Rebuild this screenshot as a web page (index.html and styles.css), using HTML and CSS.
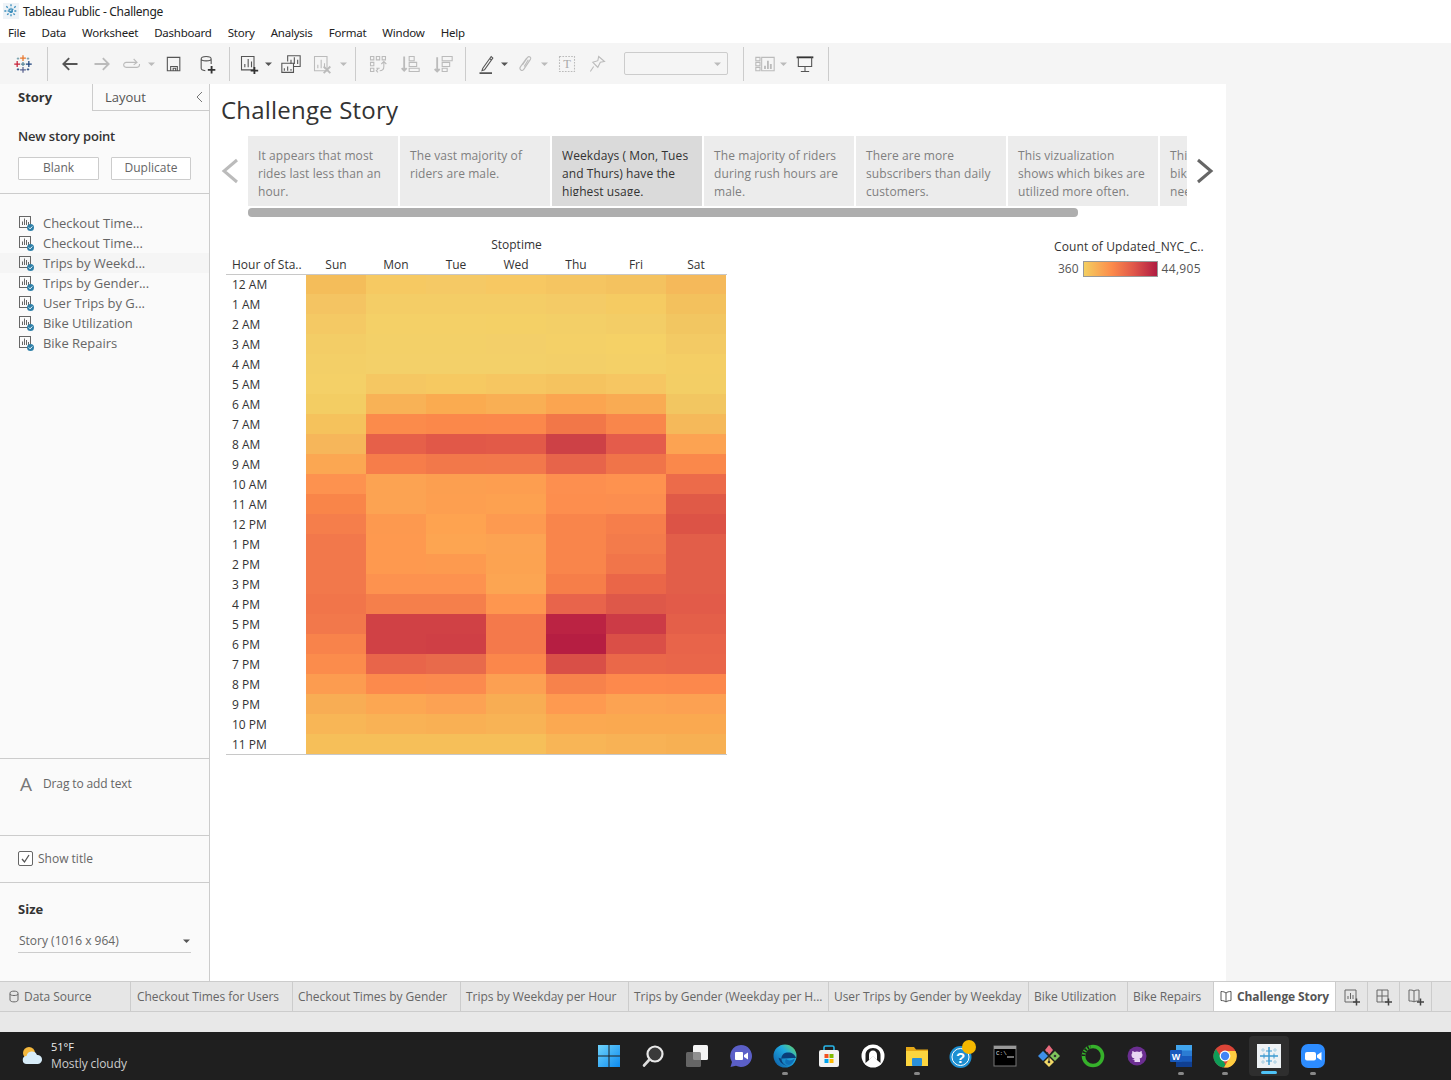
FILE: index.html
```html
<!DOCTYPE html>
<html lang="en">
<head>
  <meta charset="UTF-8" />
  <title>Tableau Public - Challenge</title>
  <link rel="stylesheet" href="styles.css">
</head>
<body>
  <svg class="defs" width="0" height="0">
    <symbol id="tab-logo" viewBox="0 0 24 24">
      <path d="M12 1.500v7M8.500 5h7" stroke="#e8762c" stroke-width="1.500"/>
      <path d="M12 15.500v7M8.500 19h7" stroke="#5b6591" stroke-width="1.500"/>
      <path d="M5 8.500v7M1.500 12h7" stroke="#c72037" stroke-width="1.500"/>
      <path d="M19 8.500v7M15.500 12h7" stroke="#1f447d" stroke-width="1.500"/>
      <path d="M12 9.500v5M9.500 12h5" stroke="#59879b" stroke-width="1.500"/>
      <path d="M6 4v3M4.500 5.500h3M18 4v3M16.500 5.500h3" stroke="#7099a6"/>
      <path d="M6 17v3M4.500 18.500h3M18 17v3M16.500 18.500h3" stroke="#1f447d"/>
    </symbol>
    <symbol id="sheet-ok" viewBox="0 0 16 16">
      <rect x="1.500" y="1.500" width="11" height="11" fill="none" stroke="#666"/>
      <path d="M4.500 10V6.500M6.500 10V3.500M8.500 10V5M10.500 10V7" stroke="#666" fill="none"/>
      <circle cx="12.500" cy="12.500" r="3.500" fill="#2f80a8"/>
      <path d="M10.800 12.500l1.300 1.300 2.200-2.300" stroke="#fff" fill="none"/>
    </symbol>
    <symbol id="caret" viewBox="0 0 8 8"><path d="M0 2.500h7L3.500 6z"/></symbol>
  </svg>

  <div class="titlebar">
    <svg class="title-icon" width="16" height="16" viewBox="0 0 24 24"><rect width="24" height="24" fill="#eef3f7"/><path d="M12 2v20M2 12h20M5 5l14 14M19 5L5 19" stroke="#3d8fbd" stroke-width="2" stroke-dasharray="3 2"/></svg>
    <span>Tableau Public - Challenge</span>
  </div>
  <nav class="menubar">
    <span>File</span><span>Data</span><span>Worksheet</span><span>Dashboard</span><span>Story</span><span>Analysis</span><span>Format</span><span>Window</span><span>Help</span>
  </nav>

  <div class="toolbar">
    <div class="tb logo-cell"><svg width="18" height="18"><use href="#tab-logo"/></svg></div>
    <i class="tb-sep"></i>
    <div class="tb w32"><svg viewBox="0 0 24 24"><path d="M21 12H4M11 5l-7 7 7 7" class="dark thick"/></svg></div>
    <div class="tb w32"><svg viewBox="0 0 24 24"><path d="M3 12h17M13 5l7 7-7 7" class="off thick"/></svg></div>
    <div class="tb w28"><svg viewBox="0 0 24 24"><path d="M17 10H5a3 3 0 0 0 0 6h13a3 3 0 0 0 3-3v-1M14 6l4 4-4 3" class="off"/></svg></div>
    <div class="tb w12"><svg class="car off-fill" width="8" height="8"><use href="#caret"/></svg></div>
    <div class="tb w32"><svg viewBox="0 0 24 24"><path d="M4 4h15v16H4zM8 20v-5h8v5M11 20v-3h3v3" class="dark"/></svg></div>
    <div class="tb w33"><svg viewBox="0 0 24 24"><path d="M5 6c0-4 12-4 12 0v6M5 6c0 3 12 3 12 0M5 6v11c0 1.500 2 2.500 5 3" class="dark"/><path d="M13 19h9M17.500 14.500v9" class="black thick"/></svg></div>
    <i class="tb-sep"></i>
    <div class="tb w26"><svg viewBox="0 0 24 24"><path d="M3 3h15v16H3zM7 16v-4M11 16V6M15 16V9" class="dark"/><path d="M14 20h9M18.500 15.500v8.500" class="black thick"/></svg></div>
    <div class="tb w14"><svg class="car dark-fill" width="8" height="8"><use href="#caret"/></svg></div>
    <div class="tb w30"><svg viewBox="0 0 24 24"><path d="M8 9V2h15v13h-8M12 12V7M16 12V4M20 12V7" class="dark"/><path d="M1 11h14v11H1zM4 20v-3M8 20v-5M12 20v-2" class="dark"/></svg></div>
    <div class="tb w32"><svg viewBox="0 0 24 24"><path d="M3 3h15v17H3zM7 17v-4M11 17V7M15 17v-6" class="off"/><path d="M14 15l8 8M22 15l-8 8" class="off thick"/></svg></div>
    <div class="tb w11"><svg class="car off-fill" width="8" height="8"><use href="#caret"/></svg></div>
    <i class="tb-sep"></i>
    <div class="tb w32"><svg viewBox="0 0 24 24"><path d="M3 3h4v4H3zM10 3h4v4h-4zM17 3h4v4h-4zM3 10h4v4H3zM3 17h4v4H3zM10 17h4M19 10v5c0 3-2 5-5 5M16 12l3-3 3 3M12 18l-2 2 2 2" class="off"/></svg></div>
    <div class="tb w32"><svg viewBox="0 0 24 24"><path d="M5 3v17M2 17l3 3 3-3" class="off thick"/><path d="M11 3h6v5h-6zM11 10h9v5h-9zM11 17h12v4H11z" class="off"/></svg></div>
    <div class="tb w33"><svg viewBox="0 0 24 24"><path d="M5 4v17M2 18l3 3 3-3" class="off thick"/><path d="M11 3h12v5H11zM11 10h9v5h-9zM11 17h6v4h-6z" class="off"/></svg></div>
    <i class="tb-sep"></i>
    <div class="tb w30"><svg viewBox="0 0 24 24"><path d="M7 17l-1 3 3-1L19 5l-2-2L7 17zM15 5l2 2" class="dark"/><path d="M3 23h15" class="dark thick"/></svg></div>
    <div class="tb w6"><svg class="car dark-fill" width="8" height="8"><use href="#caret"/></svg></div>
    <div class="tb w34"><svg viewBox="0 0 24 24"><path d="M9 13l6-9c2-2 5 0 3.500 2.500l-8 12c-2 3-6 0-4-3L14 5M11 15l5-8" class="off"/></svg></div>
    <div class="tb w6"><svg class="car off-fill" width="8" height="8"><use href="#caret"/></svg></div>
    <div class="tb w38"><svg viewBox="0 0 24 24"><rect x="3" y="3" width="18" height="18" class="off dashed"/><text x="12" y="17" class="t-glyph">T</text></svg></div>
    <div class="tb w22"><svg viewBox="0 0 24 24"><path d="M14 3l7 6-5 1-3 6-1-1-5-5 6-2zM8 15l-4 6" class="off"/></svg></div>
    <div class="dropdown"><svg class="car off-fill" width="8" height="8"><use href="#caret"/></svg></div>
    <i class="tb-sep"></i>
    <div class="tb w30"><svg viewBox="0 0 24 24"><path d="M1 4h5v4H1zM1 10h5v4H1zM1 16h5v4H1zM8 4h15v16H8z" class="off"/><path d="M12 18v-4M15.500 18V8M19 18v-6" class="off thick"/></svg></div>
    <div class="tb w8"><svg class="car off-fill" width="8" height="8"><use href="#caret"/></svg></div>
    <div class="tb w34"><svg viewBox="0 0 24 24"><path d="M2 4h20" class="black thick"/><path d="M4 4v11h16V4M12 15v6M7 21h10" class="dark"/></svg></div>
    <i class="tb-sep"></i>
  </div>

  <div class="main">
    <aside class="sidebar">
      <div class="side-tabs">
        <div class="side-tab active">Story</div>
        <div class="side-tab">Layout<svg width="8" height="12" viewBox="0 0 8 12"><path d="M7 1L2 6l5 5" fill="none" stroke="#777"/></svg></div>
      </div>
      <section class="new-point">
        <h3>New story point</h3>
        <div class="btn-row"><button>Blank</button><button>Duplicate</button></div>
      </section>
      <ul class="sheet-list">
        <li><svg><use href="#sheet-ok"/></svg>Checkout Time...</li>
        <li><svg><use href="#sheet-ok"/></svg>Checkout Time...</li>
        <li class="hover"><svg><use href="#sheet-ok"/></svg>Trips by Weekd...</li>
        <li><svg><use href="#sheet-ok"/></svg>Trips by Gender...</li>
        <li><svg><use href="#sheet-ok"/></svg>User Trips by G...</li>
        <li><svg><use href="#sheet-ok"/></svg>Bike Utilization</li>
        <li><svg><use href="#sheet-ok"/></svg>Bike Repairs</li>
      </ul>
      <section class="drag-text"><span class="big-a">A</span>Drag to add text</section>
      <section class="show-title">
        <span class="checkbox"><svg width="11" height="11" viewBox="0 0 11 11"><path d="M2 6l2.500 3L9 2" fill="none" stroke="#555" stroke-width="1.300"/></svg></span>Show title
      </section>
      <section class="size-box">
        <h3>Size</h3>
        <div class="size-select">Story (1016 x 964)<svg class="dark-fill" width="8" height="8"><use href="#caret"/></svg></div>
      </section>
    </aside>

    <div class="canvas">
      <h1 class="story-title">Challenge Story</h1>
      <div class="story-nav">
        <svg class="arrow" width="26" height="26" viewBox="0 0 26 26"><path d="M19 2L6 13l13 11" fill="none" stroke="#bbb" stroke-width="3"/></svg>
        <div class="points-wrap">
          <div class="points">
            <div class="point"><p>It appears that most rides last less than an hour.</p></div>
            <div class="point"><p>The vast majority of riders are male.</p></div>
            <div class="point current"><p>Weekdays ( Mon, Tues and Thurs) have the highest usage.</p></div>
            <div class="point"><p>The majority of riders during rush hours are male.</p></div>
            <div class="point"><p>There are more subscribers than daily customers.</p></div>
            <div class="point"><p>This vizualization shows which bikes are utilized more often.</p></div>
            <div class="point"><p>This shows which<br>bikes are most in<br>need of repairs.</p></div>
          </div>
          <div class="scroll-track"><div class="scroll-thumb"></div></div>
        </div>
        <svg class="arrow" width="26" height="26" viewBox="0 0 26 26"><path d="M7 2l13 11L7 24" fill="none" stroke="#666" stroke-width="3"/></svg>
      </div>
      <div class="viz">
        <div class="heat">
          <div class="heat-top">Stoptime</div>
          <div class="heat-grid" id="heat-grid"></div>
        </div>
        <div class="legend">
          <div class="legend-title">Count of Updated_NYC_C..</div>
          <div class="legend-scale"><span>360</span><i class="legend-bar"></i><span>44,905</span></div>
        </div>
      </div>
    </div>
    <div class="gutter"></div>
  </div>

  <div class="sheet-tabs">
    <div class="sheet-tab"><svg width="10" height="13" viewBox="0 0 10 13"><path d="M1 3c0-2.500 8-2.500 8 0v7c0 2.500-8 2.500-8 0zM1 4c0 2 8 2 8 0" fill="none" stroke="#666"/></svg>Data Source</div>
    <div class="sheet-tab">Checkout Times for Users</div>
    <div class="sheet-tab">Checkout Times by Gender</div>
    <div class="sheet-tab">Trips by Weekday per Hour</div>
    <div class="sheet-tab">Trips by Gender (Weekday per H...</div>
    <div class="sheet-tab">User Trips by Gender by Weekday</div>
    <div class="sheet-tab">Bike Utilization</div>
    <div class="sheet-tab">Bike Repairs</div>
    <div class="sheet-tab active"><svg width="12" height="13" viewBox="0 0 12 13"><path d="M6 3C5 2 3 1.500 1 1.500v9c2 0 4 .5 5 1.500 1-1 3-1.500 5-1.500v-9C9 1.500 7 2 6 3zM6 3v9" fill="none" stroke="#555"/></svg>Challenge Story</div>
    <div class="sheet-tab add"><svg width="18" height="18" viewBox="0 0 18 18"><path d="M2 2h11v12H2zM5 11V8M7.500 11V5M10 11V7" fill="none" stroke="#666"/><path d="M10 14h7M13.500 10.500v7" stroke="#444" stroke-width="1.500"/></svg></div>
    <div class="sheet-tab add"><svg width="18" height="18" viewBox="0 0 18 18"><path d="M2 2h11v12H2zM2 8h11M7 2v12" fill="none" stroke="#666"/><path d="M10 14h7M13.500 10.500v7" stroke="#444" stroke-width="1.500"/></svg></div>
    <div class="sheet-tab add"><svg width="18" height="18" viewBox="0 0 18 18"><path d="M7 3C6 2 4 2 2 2v11c2 0 4 0 5 1 1-1 3-1 5-1V2c-2 0-4 0-5 1zM7 3v11" fill="none" stroke="#666"/><path d="M10 14h7M13.500 10.500v7" stroke="#444" stroke-width="1.500"/></svg></div>
  </div>
  <div class="statusbar"></div>

  <footer class="taskbar">
    <div class="weather">
      <svg width="24" height="24" viewBox="0 0 24 24">
        <circle cx="9" cy="9" r="6" fill="#f5b83d"/>
        <path d="M7 20a4 4 0 0 1-.5-8 5.500 5.500 0 0 1 10.500-1 4.500 4.500 0 0 1 1 9z" fill="#d7ecf8"/>
      </svg>
      <div><div class="temp">51°F</div><div class="cond">Mostly cloudy</div></div>
    </div>
    <div class="task-icons">
      <div class="task-icon"><svg viewBox="0 0 24 24"><defs><linearGradient id="win" x1="0" y1="0" x2="1" y2="1"><stop offset="0" stop-color="#6fd3fb"/><stop offset="1" stop-color="#0d8bf0"/></linearGradient></defs><path d="M1 1h10.500v10.500H1zM12.500 1H23v10.500H12.500zM1 12.500h10.500V23H1zM12.500 12.500H23V23H12.500z" fill="url(#win)"/></svg></div>
      <div class="task-icon"><svg viewBox="0 0 24 24"><circle cx="14" cy="10" r="7.500" fill="#3a3a3a" stroke="#e8e8e8" stroke-width="2.200"/><path d="M8.500 15.500L3 21.500" stroke="#ddd" stroke-width="2.600" stroke-linecap="round"/></svg></div>
      <div class="task-icon"><svg viewBox="0 0 24 24"><rect x="8" y="1" width="15" height="15" rx="1.500" fill="#f4f4f4"/><rect x="1" y="8" width="15" height="15" rx="1.500" fill="#777" fill-opacity=".8"/></svg></div>
      <div class="task-icon"><svg viewBox="0 0 24 24"><path d="M12 1a11 11 0 1 1-5 20.800L1.500 23 3 18A11 11 0 0 1 12 1z" fill="#5b5fc7"/><rect x="6" y="8" width="8" height="8" rx="1" fill="#fff"/><path d="M15 11l4-2.500v7L15 13z" fill="#fff"/></svg></div>
      <div class="task-icon dot"><svg viewBox="0 0 24 24"><defs><linearGradient id="edge" x1="0" y1="1" x2="1" y2="0"><stop offset="0" stop-color="#0c59a4"/><stop offset=".6" stop-color="#1fa8e0"/><stop offset="1" stop-color="#6fdc5a"/></linearGradient></defs><circle cx="12" cy="12" r="11.500" fill="url(#edge)"/><path d="M23 14c-1-4-5-6-9-5.500-4 .5-6 3.500-5.500 7 .5 4 4.500 7 9 6-5 1-11-2-12-8 0 0 1 1 2 1" fill="#0a3d78"/><path d="M13 15c2 2 6 2 9-1-1 4-4 7-6 7-3 0-5-3-3-6z" fill="#0f6fb8"/></svg></div>
      <div class="task-icon"><svg viewBox="0 0 24 24"><path d="M7 7V3.500A1.500 1.500 0 0 1 8.500 2h7A1.500 1.500 0 0 1 17 3.500V7" fill="none" stroke="#29b6e8" stroke-width="1.600"/><rect x="2" y="6" width="20" height="17" rx="2" fill="#f2f2f2"/><path d="M7.500 10H11.500v4H7.500z" fill="#f25022"/><path d="M12.500 10h4v4h-4z" fill="#7fba00"/><path d="M7.500 15h4v4h-4z" fill="#00a4ef"/><path d="M12.500 15h4v4h-4z" fill="#ffb900"/></svg></div>
      <div class="task-icon"><svg viewBox="0 0 24 24"><circle cx="12" cy="12" r="11.500" fill="#fff"/><path d="M4.500 19V11c0-4 3-7 7.500-7s7.500 3 7.500 7v8l-3-2.500-4.500-5-4.500 5z" fill="#1f1f1f"/><path d="M8 16V11c0-3 1.800-4.500 4-4.500s4 1.500 4 4.500v5l-4-4z" fill="#fff"/></svg></div>
      <div class="task-icon dot"><svg viewBox="0 0 24 24"><path d="M1 3h8l2 2.500h12V22H1z" fill="#e6a817"/><path d="M1 7h22v15H1z" fill="#fcd53f"/><rect x="7" y="14" width="10" height="8" rx="1" fill="#2a8fd8"/></svg></div>
      <div class="task-icon badge"><svg viewBox="0 0 24 24"><circle cx="11.500" cy="13" r="11" fill="#1d8fd1"/><circle cx="11.500" cy="13" r="8.500" fill="#1d8fd1" stroke="#fff"/><text x="11.500" y="18.500" class="help-glyph">?</text></svg><i class="badge-dot"></i></div>
      <div class="task-icon"><svg viewBox="0 0 24 24"><rect x="1" y="2" width="22" height="20" fill="#000" stroke="#777"/><rect x="1" y="2" width="22" height="3" fill="#999"/><text x="3" y="11" class="cmd-glyph">C:\</text><path d="M14 13h7" stroke="#ddd"/></svg></div>
      <div class="task-icon"><svg viewBox="0 0 24 24"><path d="M12 1l4 5-4 5-4-5z" fill="#e86a7d"/><path d="M18 7l5 5-5 5-5-5z" fill="#7fc35c"/><path d="M6 7l5 5-5 5-5-5z" fill="#3f8fe8"/><path d="M12 13l5 5-5 5-5-5z" fill="#f1d866"/><circle cx="12" cy="18" r="1.300" fill="#333"/><circle cx="18" cy="12" r="1.300" fill="#333"/><path d="M12 10v8M10 8l2 3" stroke="#333"/></svg></div>
      <div class="task-icon"><svg viewBox="0 0 24 24"><circle cx="12" cy="12" r="9.500" fill="none" stroke="#36b12b" stroke-width="3.600"/><path d="M2.500 12a9.500 9.500 0 0 1 7-9.200" fill="none" stroke="#1f1f1f" stroke-width="3.600" stroke-dasharray="1.500 1.500"/></svg></div>
      <div class="task-icon"><svg viewBox="0 0 24 24"><circle cx="12" cy="12" r="9.500" fill="#6b2e91"/><path d="M9.500 18v-2c-1.500 0-2-1-2-1 2 .5 2-.5 2-.5-2-.3-3-1.500-3-3.500 0-1 .5-1.500.8-2 0 0-.3-1 .1-2 0 0 1 0 2.100 1a7 7 0 0 1 5 0c1.100-1 2.100-1 2.100-1 .4 1 .1 2 .1 2 .3.500.8 1 .8 2 0 2-1 3.200-3 3.500.5.500.5 1 .5 1.500v2" fill="#e8d6f3"/></svg></div>
      <div class="task-icon dot"><svg viewBox="0 0 24 24"><path d="M7 1h16v22H7z" fill="#2b7cd3"/><path d="M7 1h16v5.500H7z" fill="#41a5ee"/><path d="M7 12h16v5.500H7z" fill="#185abd"/><path d="M7 17.500h16V23H7z" fill="#103f91"/><rect x="1" y="6" width="12" height="12" rx="1" fill="#185abd"/><text x="7" y="15.500" class="word-glyph">W</text></svg></div>
      <div class="task-icon dot"><svg viewBox="0 0 24 24"><circle cx="12" cy="12" r="11.500" fill="#db4437"/><path d="M2 18A11.500 11.500 0 0 1 3 5l5.500 9 4 6.500-1.500 3A11.500 11.500 0 0 1 2 18z" fill="#0f9d58"/><path d="M12 7h10.500A11.500 11.500 0 0 1 11 23.500L17 13z" fill="#ffcd40"/><circle cx="12" cy="12" r="5.400" fill="#fff"/><circle cx="12" cy="12" r="4.200" fill="#4285f4"/></svg></div>
      <div class="task-icon current"><svg viewBox="0 0 24 24"><rect x="0" y="0" width="24" height="24" fill="#eef2f5"/><path d="M12 3v18M3 12h18" stroke="#3d9ad1" stroke-width="1.500"/><path d="M9 7h6M9 17h6M7 9.500v5M17 9.500v5" stroke="#3d9ad1"/><path d="M6 4v4M4 6h4M18 4v4M16 6h4M6 16v4M4 18h4M18 16v4M16 18h4" stroke="#a8cfe3"/></svg><i class="run-bar"></i></div>
      <div class="task-icon dot"><svg viewBox="0 0 24 24"><rect x="0" y="0" width="24" height="24" rx="7" fill="#2d8cff"/><rect x="4" y="8" width="11" height="8.500" rx="2" fill="#fff"/><path d="M16 11l4.500-3v8.500L16 13.500z" fill="#fff"/></svg></div>
    </div>
  </footer>

  <script src="heatmap.js"></script>
</body>
</html>
```
FILE: styles.css
```css
* { box-sizing: border-box; margin: 0; padding: 0; }
body { width: 1451px; height: 1080px; overflow: hidden; background: #fff; color: #444; font-family: "Open Sans", "Noto Sans", sans-serif; font-size: 12px; display: flex; flex-direction: column; }
svg { display: block; }
.defs { position: absolute; }

/* window chrome */
.titlebar { height: 22px; display: flex; align-items: center; padding-left: 3px; gap: 4px; color: #222; font-family: "Noto Sans", sans-serif; font-size: 12px; letter-spacing: -.28px; }
.menubar { height: 21px; display: flex; align-items: center; padding-left: 8px; gap: 16px; color: #222; font-family: "Noto Sans", sans-serif; font-size: 11.5px; letter-spacing: -.22px; }

/* toolbar */
.toolbar { height: 41px; background: #f5f5f5; display: flex; align-items: center; flex: none; }
.tb { display: flex; justify-content: center; align-items: center; height: 100%; }
.tb svg { width: 20px; height: 20px; flex: none; }
.tb svg.car { width: 8px; height: 8px; }
.tb path, .tb rect { fill: none; stroke-width: 1.300; }
.tb .car path, .tb use { stroke: none; }
.dark { stroke: #555; }
.off { stroke: #bbb; }
.black { stroke: #333; }
.thick { stroke-width: 2.200 !important; }
.dashed { stroke-dasharray: 2 1.500; }
.dark-fill { fill: #555; }
.off-fill { fill: #bbb; }
.t-glyph { font-family: "Liberation Serif", serif; font-size: 15px; fill: #aaa; text-anchor: middle; }
.tb-sep { width: 1px; height: 34px; background: #ccc; margin: 0 6px; flex: none; }
.logo-cell { width: 41px; padding-left: 5px; }
.w6 { width: 6px; } .w8 { width: 8px; } .w11 { width: 11px; } .w12 { width: 12px; } .w14 { width: 14px; }
.w22 { width: 22px; } .w26 { width: 26px; } .w28 { width: 28px; } .w30 { width: 30px; } .w32 { width: 32px; }
.w33 { width: 33px; } .w34 { width: 34px; } .w38 { width: 38px; }
.dropdown { width: 104px; height: 23px; margin: 0 9px 0 16px; border: 1px solid #ccc; border-radius: 2px; display: flex; align-items: center; justify-content: flex-end; padding-right: 5px; flex: none; }

/* main area */
.main { height: 897px; display: flex; flex: none; }
.sidebar { width: 210px; background: #fafafa; border-right: 1px solid #ccc; display: flex; flex-direction: column; flex: none; color: #555; }
.side-tabs { display: flex; height: 27px; }
.side-tab { height: 27px; line-height: 27px; font-size: 13px; }
.side-tab.active { width: 92px; padding-left: 18px; font-weight: 700; color: #333; }
.side-tab:not(.active) { flex: 1; border-left: 1px solid #ccc; border-bottom: 1px solid #ccc; padding-left: 12px; display: flex; align-items: center; justify-content: space-between; padding-right: 6px; }
.new-point { height: 83px; border-bottom: 1px solid #ccc; padding: 16px 18px 0; }
.new-point h3, .size-box h3 { font-size: 13px; font-weight: 700; color: #333; line-height: 18px; }
.new-point h3 { font-weight: 600; letter-spacing: -.2px; }
.btn-row { display: flex; justify-content: space-between; margin-top: 12px; }
.btn-row button { width: 81px; height: 23px; background: #fff; border: 1px solid #ccc; border-radius: 1px; color: #666; font: 12px "Open Sans", sans-serif; line-height: 20px; padding-bottom: 2px; }
.btn-row button + button { width: 80px; }
.sheet-list { list-style: none; height: 564px; padding-top: 19px; }
.sheet-list li { height: 20px; display: flex; align-items: center; gap: 9px; padding-left: 18px; font-size: 13px; color: #666; letter-spacing: -.03px; }
.sheet-list li.hover { background: #f5f5f5; }
.sheet-list svg { width: 16px; height: 16px; }
.drag-text { height: 77px; border-top: 1px solid #ccc; display: flex; align-items: flex-start; padding: 15px 0 0 20px; gap: 12px; color: #666; line-height: 20px; letter-spacing: -.12px; }
.big-a { font-size: 19px; color: #777; width: 11px; }
.show-title { height: 48px; border-top: 1px solid #ccc; border-bottom: 1px solid #ccc; display: flex; align-items: center; padding: 0 0 1px 18px; gap: 5px; color: #666; }
.checkbox { width: 15px; height: 15px; border: 1px solid #666; border-radius: 2px; display: flex; align-items: center; justify-content: center; background: #fff; }
.size-box { padding: 17px 18px 0; flex: 1; }
.size-select { margin-top: 11px; width: 173px; height: 24px; border-bottom: 1px solid #ccc; display: flex; align-items: center; justify-content: space-between; color: #666; padding: 0 0 0 1px; }

/* story */
.canvas { width: 1016px; background: #fff; flex: none; overflow: hidden; }
.gutter { flex: 1; background: #f5f5f5; }
.story-title { height: 52px; line-height: 51px; padding-left: 11px; font-size: 24px; font-weight: 400; color: #333; letter-spacing: .2px; }
.story-nav { display: flex; align-items: flex-start; height: 82px; padding-left: 8px; }
.story-nav .arrow { margin-top: 22px; flex: none; }
.story-nav .arrow:first-child { margin-right: 4px; }
.story-nav .arrow:last-child { margin-left: 4px; }
.points-wrap { width: 939px; flex: none; overflow: hidden; }
.points { display: flex; gap: 2px; }
.point { width: 150px; height: 70px; background: #ececec; color: #7f7f7f; flex: none; padding: 11px 5px 0 10px; font-size: 12px; line-height: 18px; letter-spacing: .09px; }
.point.current { background: #dadada; color: #333; }
.point.current p { height: 49px; overflow: hidden; }
.scroll-track { margin-top: 2px; height: 9px; }
.scroll-thumb { width: 830px; height: 9px; background: #aeaeae; border-radius: 4px; }

/* heat map */
.viz { display: flex; padding-left: 16px; }
.heat { width: 501px; flex: none; }
.heat-top { height: 20px; line-height: 22px; margin-left: 80px; text-align: center; margin-top: 16px; color: #333; }
.heat-grid { display: grid; grid-template-columns: 80px repeat(7, 60px); grid-auto-rows: 20px; border-bottom: 1px solid #c8c8c8; width: 501px; position: relative; }
.heat-grid::before { content: ""; position: absolute; left: 0; right: 0; top: 20px; height: 1px; background: #c8c8c8; z-index: 1; }
.hd { line-height: 22px; text-align: center; color: #333; }
.hd.first { text-align: left; padding-left: 6px; }
.hr { line-height: 22px; padding-left: 6px; color: #333; }
.legend { margin-left: 327px; padding-top: 19px; width: 165px; }
.legend-title { line-height: 20px; color: #333; letter-spacing: .1px; white-space: nowrap; }
.legend-scale { display: flex; align-items: center; gap: 4px; margin-top: 3px; padding-left: 4px; color: #555; }
.legend-bar { width: 75px; height: 16px; border: 1px solid #999; background: linear-gradient(to right, #f4cf60, #fc8b4b 38%, #e0574a 68%, #b01c42); }
.legend-scale span:last-child { letter-spacing: .3px; }

/* sheet tabs */
.sheet-tabs { height: 31px; background: #e6e6e6; border-top: 1px solid #ccc; border-bottom: 1px solid #ccc; padding-left: 1px; display: grid; grid-template-columns: 130px 162px 168px 168px 200px 200px 99px 86px 122px 32px 32px 32px; flex: none; color: #666; }
.sheet-tab { display: flex; align-items: center; gap: 5px; padding-left: 5px; border-right: 1px solid #ccc; font-size: 12px; letter-spacing: -.05px; white-space: nowrap; overflow: hidden; }
.sheet-tab:first-child { padding-left: 8px; }
.sheet-tab:nth-child(2) { padding-left: 6px; }
.sheet-tab.active { background: #fff; font-weight: 700; color: #555; padding-left: 6px; letter-spacing: -.1px; }
.sheet-tab.add { padding-left: 7px; }
.statusbar { height: 20px; background: #e8e8e8; flex: none; }

/* windows taskbar */
.taskbar { flex: 1; background: #1f1f1f; display: flex; align-items: center; position: relative; color: #fff; }
.weather { display: flex; align-items: center; gap: 7px; padding-left: 20px; width: 587px; flex: none; }
.temp { font-size: 11px; line-height: 16px; color: #eee; }
.cond { font-size: 12px; line-height: 18px; color: #ccc; letter-spacing: -.08px; }
.task-icons { display: flex; }
.task-icon { width: 44px; height: 48px; display: flex; align-items: center; justify-content: center; position: relative; }
.task-icon svg { width: 24px; height: 24px; }
.task-icon.dot::after { content: ""; position: absolute; left: 19px; bottom: 5px; width: 6px; height: 3px; border-radius: 2px; background: #888; }
.task-icon.current::before { content: ""; position: absolute; left: 2px; right: 2px; top: 4px; bottom: 4px; background: #2e2e2e; border-radius: 4px; }
.task-icon.current svg { position: relative; }
.run-bar { position: absolute; left: 14px; bottom: 6px; width: 16px; height: 3px; border-radius: 2px; background: #4fc3f7; }
.badge-dot { position: absolute; left: 23px; top: 8px; width: 14px; height: 14px; border-radius: 50%; background: #f5b800; }
.help-glyph { font: 700 15px "Liberation Sans", sans-serif; fill: #fff; text-anchor: middle; }
.cmd-glyph { font: 6px "Liberation Mono", monospace; fill: #ddd; }
.word-glyph { font: 700 9px "Liberation Sans", sans-serif; fill: #fff; text-anchor: middle; }
```
FILE: heatmap.js
```js
// cell colours per hour, Sun..Sat
const days = ['Sun', 'Mon', 'Tue', 'Wed', 'Thu', 'Fri', 'Sat'];
const hours = ['12 AM', '1 AM', '2 AM', '3 AM', '4 AM', '5 AM', '6 AM', '7 AM', '8 AM', '9 AM', '10 AM', '11 AM',
  '12 PM', '1 PM', '2 PM', '3 PM', '4 PM', '5 PM', '6 PM', '7 PM', '8 PM', '9 PM', '10 PM', '11 PM'];
const cells = [
  'f4bd5a f6c962 f5c965 f7c862 f5c561 f4c25f f5b95a',
  'f4c462 f4cd66 f4cd66 f4cd66 f4cb66 f5cb62 f3c15d',
  'f4c964 f4d067 f4d067 f4d066 f3cf67 f3cd66 f2c661',
  'f3cd66 f3d068 f3d068 f3cf69 f4d067 f5d166 f3ca64',
  'f3cf67 f3d069 f3d069 f3d069 f3cf68 f4d067 f4ce65',
  'f4d067 f5c762 f6c961 f6c661 f5c35f f6c662 f3ce65',
  'f3cd63 f8b256 faab50 f9af54 fba550 f9ab53 f2c661',
  'f5c25c fb8b4b fb884a fb884b f27748 f9864b f5b95a',
  'f6b65a e66049 e15848 e25a48 cd4146 e45c4b fca352',
  'fba752 f67d4a f2784a f2784b e7644a f07449 fa884b',
  'fd924f fca352 fc9f50 fd9e50 fd8f4f fe924f ec6b4a',
  'f98549 fca352 fd9f50 fda150 fd8e4e fc8e4f e05a47',
  'f57e4b fd994f fea350 fd9a50 f9854b f67e4b dc5346',
  'f2784b fe994f fda551 fca352 f9854b f37b4b e25e49',
  'f2784b fe994f fd9a4f fca351 f9854b f1754a e25e49',
  'f2784b fd924f fd924f fca552 f67e49 ea6648 e25e49',
  'f1754a f57f4b f57f4b fe964f e8644b de5849 e25b49',
  'f2784b d04145 d04145 f4794b bb2343 cc3b46 e45f49',
  'f8834b d04145 cf3f45 f4794b b61e42 da4f47 e8644a',
  'fb8c4c e8654a e86a4b fb874b d94f47 ea6849 e9664a',
  'fc9c50 fc8a4c fb8a4e fca052 f7824b fd894c fc884c',
  'f8ad54 fca752 fca253 f8ad53 fe9a50 fca352 fca152',
  'f8b656 f9b255 f9b054 f8b355 fba951 faa950 faa950',
  'f6bf59 f6bf59 f6bf59 f6bf59 f8b556 f8b255 f7b053'
];

const grid = document.getElementById('heat-grid');
let html = '<div class="hd first">Hour of Sta..</div>' + days.map(d => `<div class="hd">${d}</div>`).join('');
hours.forEach((h, i) => {
  html += `<div class="hr">${h}</div>`;
  cells[i].split(' ').forEach(c => { html += `<div style="background:#${c}"></div>`; });
});
grid.innerHTML = html;
```
